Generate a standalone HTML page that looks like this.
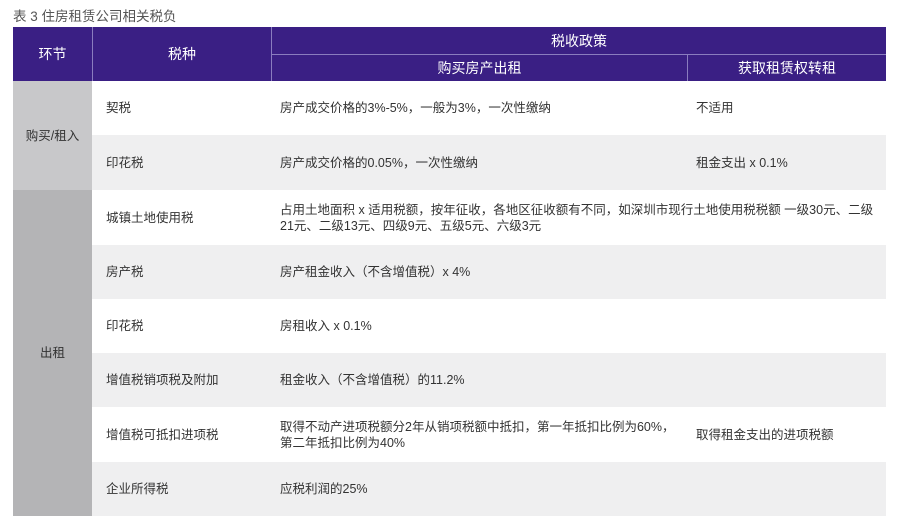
<!DOCTYPE html>
<html><head><meta charset="utf-8"><style>
body{margin:0;width:900px;height:528px;background:#fff;font-family:"Liberation Sans","Noto Sans CJK SC",sans-serif;position:relative;overflow:hidden}
.t{position:absolute;left:13px;top:5px;font-size:13.5px;color:#555}
.a{position:absolute;box-sizing:border-box;display:flex;align-items:center}
.h{background:#3a1f84;color:#fff;font-size:14px;justify-content:center}
.c{font-size:12.5px;color:#333;line-height:16px;white-space:nowrap}
</style></head><body>
<div class="t">表 3 住房租赁公司相关税负</div>
<div class="a h" style="left:13px;top:27px;width:79px;height:54px">环节</div>
<div class="a h" style="left:93px;top:27px;width:178px;height:54px">税种</div>
<div class="a h" style="left:272px;top:27px;width:614px;height:27px">税收政策</div>
<div class="a h" style="left:272px;top:55px;width:415px;height:26px">购买房产出租</div>
<div class="a h" style="left:688px;top:55px;width:198px;height:26px">获取租赁权转租</div>
<div style="position:absolute;left:92px;top:27px;width:1px;height:54px;background:#8a7cbf"></div>
<div style="position:absolute;left:271px;top:27px;width:1px;height:54px;background:#8a7cbf"></div>
<div style="position:absolute;left:272px;top:54px;width:614px;height:1px;background:#8a7cbf"></div>
<div style="position:absolute;left:687px;top:55px;width:1px;height:26px;background:#8a7cbf"></div>

<div class="a c" style="left:13px;top:81px;width:79px;height:109px;background:#c8c8ca;justify-content:center">购买/租入</div>
<div class="a c" style="left:13px;top:190px;width:79px;height:326px;background:#b4b4b6;justify-content:center">出租</div>

<div style="position:absolute;left:92px;top:81px;width:794px">
<div style="height:54px;background:#fff;position:relative"><span class="a c" style="left:14px;height:54px">契税</span><span class="a c" style="left:188px;height:54px">房产成交价格的3%-5%，一般为3%，一次性缴纳</span><span class="a c" style="left:604px;height:54px">不适用</span></div>
<div style="height:55px;background:#efeff0;position:relative"><span class="a c" style="left:14px;height:55px">印花税</span><span class="a c" style="left:188px;height:55px">房产成交价格的0.05%，一次性缴纳</span><span class="a c" style="left:604px;height:55px">租金支出 x 0.1%</span></div>
<div style="height:55px;background:#fff;position:relative"><span class="a c" style="left:14px;height:55px">城镇土地使用税</span><span class="a c" style="left:188px;height:55px">占用土地面积 x 适用税额，按年征收，各地区征收额有不同，如深圳市现行土地使用税税额 一级30元、二级<br>21元、二级13元、四级9元、五级5元、六级3元</span></div>
<div style="height:54px;background:#efeff0;position:relative"><span class="a c" style="left:14px;height:54px">房产税</span><span class="a c" style="left:188px;height:54px">房产租金收入（不含增值税）x 4%</span></div>
<div style="height:54px;background:#fff;position:relative"><span class="a c" style="left:14px;height:54px">印花税</span><span class="a c" style="left:188px;height:54px">房租收入 x 0.1%</span></div>
<div style="height:54px;background:#efeff0;position:relative"><span class="a c" style="left:14px;height:54px">增值税销项税及附加</span><span class="a c" style="left:188px;height:54px">租金收入（不含增值税）的11.2%</span></div>
<div style="height:55px;background:#fff;position:relative"><span class="a c" style="left:14px;height:55px">增值税可抵扣进项税</span><span class="a c" style="left:188px;height:55px">取得不动产进项税额分2年从销项税额中抵扣，第一年抵扣比例为60%，<br>第二年抵扣比例为40%</span><span class="a c" style="left:604px;height:55px">取得租金支出的进项税额</span></div>
<div style="height:54px;background:#efeff0;position:relative"><span class="a c" style="left:14px;height:54px">企业所得税</span><span class="a c" style="left:188px;height:54px">应税利润的25%</span></div>
</div>
</body></html>
